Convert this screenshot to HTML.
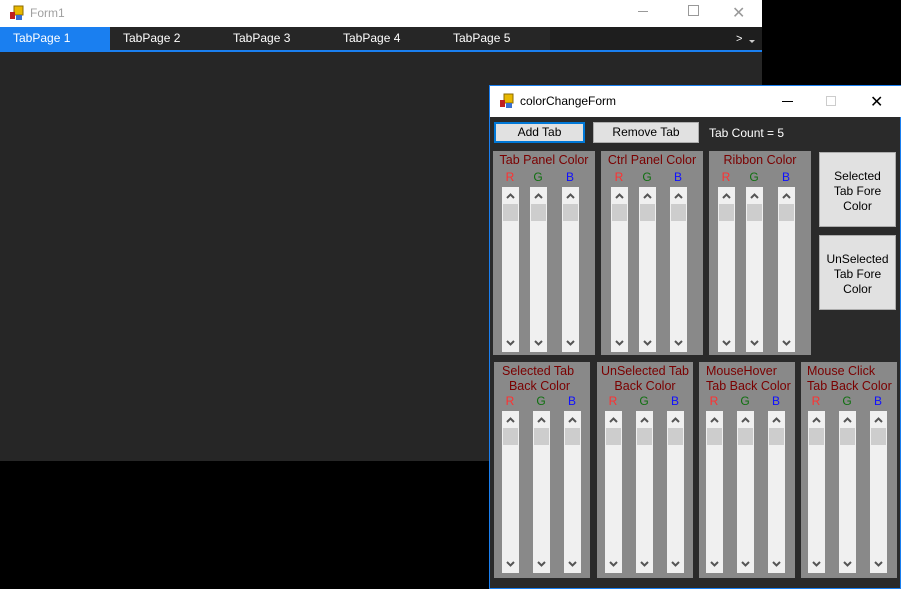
<!DOCTYPE html>
<html><head><style>
*{margin:0;padding:0;box-sizing:border-box}
body{width:901px;height:589px;background:#000;position:relative;overflow:hidden;font-family:"Liberation Sans",sans-serif;font-size:12px}
.a{position:absolute}
.tab{position:absolute;top:27px;height:23px;width:110px;color:#fff;line-height:23px;padding-left:13px;font-size:12px}
.pn{position:absolute;background:#898989}
.tt{position:absolute;left:0;right:0;text-align:center;color:#7a0000;font-size:12.5px;line-height:15px}
.l{position:absolute;font-size:12px;width:16px;text-align:center}
.sb{position:absolute;width:17px;background:#f0f0f0}
.sb .th{position:absolute;left:1px;right:1px;top:17px;height:17px;background:#cdcdcd}
.sb .u,.sb .d{position:absolute;left:0;width:17px;height:10px}
.btn{position:absolute;background:#e1e1e1;border:1px solid #adadad;text-align:center;color:#000;font-size:12px}
</style></head><body>
<div class="a" style="left:0;top:0;width:762px;height:461px;background:#262626"></div>
<div class="a" style="left:0;top:0;width:762px;height:27px;background:#fff"></div>
<svg class="a" style="left:9px;top:5px" width="16" height="16"><rect x="5" y="1" width="9" height="9" fill="#e8b800" stroke="#8a6a00"/><rect x="1" y="7" width="5" height="7" fill="#c02020"/><rect x="7" y="10" width="6" height="5" fill="#3a70d0"/></svg>
<div class="a" style="left:30px;top:6px;color:#a0a0a0;font-size:12px">Form1</div>
<div class="a" style="left:638px;top:11px;width:10px;height:1px;background:#999"></div>
<div class="a" style="left:688px;top:5px;width:11px;height:11px;border:1px solid #999"></div>
<div class="a" style="left:732px;top:3px;color:#999;font-size:16px">✕</div>
<div class="a" style="left:0;top:27px;width:762px;height:23px;background:#1e1e1e"></div>
<div class="tab" style="left:0;background:#1a7ff0">TabPage 1</div>
<div class="tab" style="left:110px;background:#262626">TabPage 2</div>
<div class="tab" style="left:220px;background:#262626">TabPage 3</div>
<div class="tab" style="left:330px;background:#262626">TabPage 4</div>
<div class="tab" style="left:440px;background:#262626">TabPage 5</div>
<div class="a" style="left:736px;top:33px;color:#fff;font-size:11px">&gt;</div>
<div class="a" style="left:749px;top:40px;border-left:3px solid transparent;border-right:3px solid transparent;border-top:3px solid #ccc"></div>
<div class="a" style="left:0;top:50px;width:762px;height:2px;background:#1a7ff0"></div>

<div class="a" style="left:489px;top:85px;width:412px;height:504px;background:#2a2a2a;border:1px solid #1a7ff0"></div>
<div class="a" style="left:490px;top:86px;width:411px;height:31px;background:#fff"></div>
<svg class="a" style="left:499px;top:93px" width="16" height="16"><rect x="5" y="1" width="9" height="9" fill="#e8b800" stroke="#8a6a00"/><rect x="1" y="7" width="5" height="7" fill="#c02020"/><rect x="7" y="10" width="6" height="5" fill="#3a70d0"/></svg>
<div class="a" style="left:520px;top:94px;color:#000;font-size:12px">colorChangeForm</div>
<div class="a" style="left:782px;top:101px;width:11px;height:1px;background:#000"></div>
<div class="a" style="left:826px;top:96px;width:10px;height:10px;border:1px solid #ccc"></div>
<div class="a" style="left:870px;top:92px;color:#000;font-size:16px">✕</div>

<div class="btn" style="left:494px;top:122px;width:91px;height:21px;border:2px solid #0078d7;line-height:17px">Add Tab</div>
<div class="btn" style="left:593px;top:122px;width:106px;height:21px;line-height:19px">Remove Tab</div>
<div class="a" style="left:709px;top:126px;color:#fff;font-size:12px">Tab Count = 5</div>

<div class="btn" style="left:819px;top:152px;width:77px;height:75px;padding-top:16px;line-height:15px">Selected<br>Tab Fore<br>Color</div>
<div class="btn" style="left:819px;top:235px;width:77px;height:75px;padding-top:16px;line-height:15px">UnSelected<br>Tab Fore<br>Color</div>

<div class="pn" style="left:493px;top:151px;width:102px;height:204px"><div class="tt" style="top:2px">Tab Panel Color</div></div>
<div class="pn" style="left:601px;top:151px;width:102px;height:204px"><div class="tt" style="top:2px">Ctrl Panel Color</div></div>
<div class="pn" style="left:709px;top:151px;width:102px;height:204px"><div class="tt" style="top:2px">Ribbon Color</div></div>
<div class="pn" style="left:494px;top:362px;width:96px;height:216px"><div class="tt" style="top:2px;text-align:left;padding-left:8px">Selected Tab<br>&nbsp;&nbsp;Back Color</div></div>
<div class="pn" style="left:597px;top:362px;width:96px;height:216px"><div class="tt" style="top:2px">UnSelected Tab<br>Back Color</div></div>
<div class="pn" style="left:699px;top:362px;width:96px;height:216px"><div class="tt" style="top:2px;text-align:left;padding-left:7px">MouseHover<br>Tab Back Color</div></div>
<div class="pn" style="left:801px;top:362px;width:96px;height:216px"><div class="tt" style="top:2px;text-align:left;padding-left:6px">Mouse Click<br>Tab Back Color</div></div>

<div id="sbs"></div>
<script>
var cols=[[502,530,562,187,165],[611,639,670,187,165],[718,746,778,187,165],[502,533,564,411,162],[605,636,667,411,162],[706,737,768,411,162],[808,839,870,411,162]];
var h='';var lc=['#ff3030','#107010','#1010ff'],lt=['R','G','B'];
var arrU='<svg class="u" style="top:4px" width="17" height="10"><path d="M5 7 L8.5 3.5 L12 7" stroke="#555" stroke-width="2" fill="none"/></svg>';
cols.forEach(function(c){
 for(var i=0;i<3;i++){
  var x=c[i],y=c[3],hh=c[4];
  h+='<div class="l" style="left:'+x+'px;top:'+(y-17)+'px;color:'+lc[i]+'">'+lt[i]+'</div>';
  h+='<div class="sb" style="left:'+x+'px;top:'+y+'px;height:'+hh+'px">'+arrU+'<div class="th"></div><svg class="d" style="top:'+(hh-14)+'px" width="17" height="10"><path d="M5 3 L8.5 6.5 L12 3" stroke="#555" stroke-width="2" fill="none"/></svg></div>';
 }
});
document.getElementById('sbs').innerHTML=h;
</script>
</body></html>
